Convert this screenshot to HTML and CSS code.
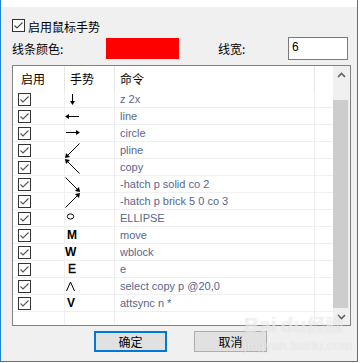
FILE: index.html
```html
<!DOCTYPE html>
<html>
<head>
<meta charset="utf-8">
<link rel="stylesheet" href="styles.css">
</head>
<body>
<div class="frame">
  <div class="strip"></div>
  <div class="dialog">
    <div class="enable">
      <span class="cb"><svg width="11" height="11" viewBox="0 0 11 11"><polyline points="1.5,5.5 4,8 9.5,2.5" fill="none" stroke="#444" stroke-width="1.1"/></svg></span>
      <span class="cjk">启用鼠标手势</span>
    </div>
    <div class="colorrow">
      <span class="cjk lbl-color">线条颜色:</span>
      <span class="swatch"></span>
      <span class="cjk lbl-width">线宽:</span>
      <span class="input">6</span>
    </div>
    <div class="list">
      <div class="grid">
        <div class="hd hd1 cjk">启用</div>
        <div class="hd cjk">手势</div>
        <div class="hd cjk">命令</div>
        <div class="hd hd-last"></div>

        <div class="c c1"><span class="cb"><svg width="11" height="11" viewBox="0 0 11 11"><polyline points="1.5,5.5 4,8 9.5,2.5" fill="none" stroke="#555" stroke-width="1.1"/></svg></span></div>
        <div class="c c2"><svg width="16" height="16" viewBox="0 0 16 16"><line x1="7.5" y1="3" x2="7.5" y2="11" stroke="#000"/><polygon points="5,10 10,10 7.5,14" fill="#000"/></svg></div>
        <div class="c c3">z 2x</div>
        <div class="c c4"></div>

        <div class="c c1"><span class="cb"><svg width="11" height="11" viewBox="0 0 11 11"><polyline points="1.5,5.5 4,8 9.5,2.5" fill="none" stroke="#555" stroke-width="1.1"/></svg></span></div>
        <div class="c c2"><svg width="16" height="16" viewBox="0 0 16 16"><line x1="3" y1="8.5" x2="14" y2="8.5" stroke="#000"/><polygon points="0,8.5 4,6 4,11" fill="#000"/></svg></div>
        <div class="c c3">line</div>
        <div class="c c4"></div>

        <div class="c c1"><span class="cb"><svg width="11" height="11" viewBox="0 0 11 11"><polyline points="1.5,5.5 4,8 9.5,2.5" fill="none" stroke="#555" stroke-width="1.1"/></svg></span></div>
        <div class="c c2"><svg width="16" height="16" viewBox="0 0 16 16"><line x1="1" y1="7.5" x2="12" y2="7.5" stroke="#000"/><polygon points="15,7.5 11,5 11,10" fill="#000"/></svg></div>
        <div class="c c3">circle</div>
        <div class="c c4"></div>

        <div class="c c1"><span class="cb"><svg width="11" height="11" viewBox="0 0 11 11"><polyline points="1.5,5.5 4,8 9.5,2.5" fill="none" stroke="#555" stroke-width="1.1"/></svg></span></div>
        <div class="c c2"><svg width="16" height="16" viewBox="0 0 16 16"><line x1="14.5" y1="1.5" x2="2.5" y2="13.5" stroke="#000"/><polygon points="0,16 1,11 5,15" fill="#000"/></svg></div>
        <div class="c c3">pline</div>
        <div class="c c4"></div>

        <div class="c c1"><span class="cb"><svg width="11" height="11" viewBox="0 0 11 11"><polyline points="1.5,5.5 4,8 9.5,2.5" fill="none" stroke="#555" stroke-width="1.1"/></svg></span></div>
        <div class="c c2"><svg width="16" height="16" viewBox="0 0 16 16"><line x1="2.5" y1="2.5" x2="14.5" y2="14.5" stroke="#000"/><polygon points="0,0 5,1 1,5" fill="#000"/></svg></div>
        <div class="c c3">copy</div>
        <div class="c c4"></div>

        <div class="c c1"><span class="cb"><svg width="11" height="11" viewBox="0 0 11 11"><polyline points="1.5,5.5 4,8 9.5,2.5" fill="none" stroke="#555" stroke-width="1.1"/></svg></span></div>
        <div class="c c2"><svg width="16" height="16" viewBox="0 0 16 16"><line x1="0.5" y1="1.5" x2="12.5" y2="13.5" stroke="#000"/><polygon points="15,16 10,15 14,11" fill="#000"/></svg></div>
        <div class="c c3">-hatch p solid co 2</div>
        <div class="c c4"></div>

        <div class="c c1"><span class="cb"><svg width="11" height="11" viewBox="0 0 11 11"><polyline points="1.5,5.5 4,8 9.5,2.5" fill="none" stroke="#555" stroke-width="1.1"/></svg></span></div>
        <div class="c c2"><svg width="16" height="16" viewBox="0 0 16 16"><line x1="0.5" y1="14.5" x2="12.5" y2="2.5" stroke="#000"/><polygon points="15,0 10,1 14,5" fill="#000"/></svg></div>
        <div class="c c3">-hatch p brick 5 0 co 3</div>
        <div class="c c4"></div>

        <div class="c c1"><span class="cb"><svg width="11" height="11" viewBox="0 0 11 11"><polyline points="1.5,5.5 4,8 9.5,2.5" fill="none" stroke="#555" stroke-width="1.1"/></svg></span></div>
        <div class="c c2"><svg width="16" height="16" viewBox="0 0 16 16"><ellipse cx="5.5" cy="6.5" rx="3.2" ry="2.6" fill="none" stroke="#000"/></svg></div>
        <div class="c c3">ELLIPSE</div>
        <div class="c c4"></div>

        <div class="c c1"><span class="cb"><svg width="11" height="11" viewBox="0 0 11 11"><polyline points="1.5,5.5 4,8 9.5,2.5" fill="none" stroke="#555" stroke-width="1.1"/></svg></span></div>
        <div class="c c2"><span class="g g-m">M</span></div>
        <div class="c c3">move</div>
        <div class="c c4"></div>

        <div class="c c1"><span class="cb"><svg width="11" height="11" viewBox="0 0 11 11"><polyline points="1.5,5.5 4,8 9.5,2.5" fill="none" stroke="#555" stroke-width="1.1"/></svg></span></div>
        <div class="c c2"><span class="g g-w">W</span></div>
        <div class="c c3">wblock</div>
        <div class="c c4"></div>

        <div class="c c1"><span class="cb"><svg width="11" height="11" viewBox="0 0 11 11"><polyline points="1.5,5.5 4,8 9.5,2.5" fill="none" stroke="#555" stroke-width="1.1"/></svg></span></div>
        <div class="c c2"><span class="g g-e">E</span></div>
        <div class="c c3">e</div>
        <div class="c c4"></div>

        <div class="c c1"><span class="cb"><svg width="11" height="11" viewBox="0 0 11 11"><polyline points="1.5,5.5 4,8 9.5,2.5" fill="none" stroke="#555" stroke-width="1.1"/></svg></span></div>
        <div class="c c2"><svg width="16" height="16" viewBox="0 0 16 16"><polyline points="1.5,13 5.5,4 9.5,13" fill="none" stroke="#000"/></svg></div>
        <div class="c c3">select copy p @20,0</div>
        <div class="c c4"></div>

        <div class="c c1"><span class="cb"><svg width="11" height="11" viewBox="0 0 11 11"><polyline points="1.5,5.5 4,8 9.5,2.5" fill="none" stroke="#555" stroke-width="1.1"/></svg></span></div>
        <div class="c c2"><span class="g g-v">V</span></div>
        <div class="c c3">attsync n *</div>
        <div class="c c4"></div>

        <div class="f"></div>
        <div class="f"></div>
        <div class="f"></div>
        <div class="f f-last"></div>
      </div>
      <div class="scrollbar">
        <div class="sb-btn"><svg width="9" height="6" viewBox="0 0 9 6"><polyline points="1,5 4.5,1.5 8,5" fill="none" stroke="#606060" stroke-width="1.6"/></svg></div>
        <div class="sb-gap"></div>
        <div class="sb-thumb"></div>
        <div class="sb-btn"><svg width="9" height="6" viewBox="0 0 9 6"><polyline points="1,1 4.5,4.5 8,1" fill="none" stroke="#606060" stroke-width="1.6"/></svg></div>
      </div>
    </div>
    <div class="buttons">
      <button class="btn btn-default cjk">确定</button>
      <button class="btn cjk">取消</button>
    </div>
  </div>
  <div class="watermark">
    <div class="wm-logo"><span class="wm-bai">Bai</span><span class="wm-du">du</span><span class="wm-jy">经验</span></div>
    <div class="wm-url">jingyan.baidu.com</div>
  </div>
</div>
</body>
</html>
```
FILE: styles.css
```css
html, body {
  margin: 0;
  padding: 0;
  background: #ffffff;
}
body {
  width: 362px;
  height: 363px;
  overflow: hidden;
  font-family: "Liberation Sans", Arial, sans-serif;
}
.cjk {
  font-family: "Noto Sans CJK SC", "Liberation Sans", sans-serif;
  font-size: 12px;
  color: #000;
}
.frame {
  position: relative;
  width: 356px;
  height: 361px;
  border-left: 1px solid #1e82d8;
  border-right: 1px solid #1e82d8;
  border-bottom: 1px solid #1e82d8;
}
.strip {
  height: 7px;
  background: #ffffff;
}
.dialog {
  height: 342px;
  background: #f0f0f0;
  padding: 12px 0 0 11px;
}
.cb {
  display: inline-flex;
  align-items: center;
  justify-content: center;
  box-sizing: border-box;
  width: 13px;
  height: 13px;
  border: 1px solid #333;
  background: #fff;
}
.cb svg {
  display: block;
}
.enable {
  display: flex;
  align-items: center;
  gap: 3px;
  height: 13px;
  line-height: 13px;
}
.enable .cjk {
  position: relative;
  top: 1px;
}
.colorrow {
  display: flex;
  align-items: center;
  height: 23px;
  margin-top: 5px;
  line-height: 14px;
}
.lbl-color {
  width: 94px;
}
.swatch {
  width: 73px;
  height: 21px;
  background: #ff0000;
}
.lbl-width {
  margin-left: 39px;
  width: 70px;
}
.input {
  box-sizing: border-box;
  width: 60px;
  height: 23px;
  border: 1px solid #7a7a7a;
  background: #fff;
  font-size: 12px;
  line-height: 19px;
  padding-left: 3px;
  color: #000;
}
.list {
  box-sizing: border-box;
  display: flex;
  width: 339px;
  height: 261px;
  margin-top: 5px;
  border: 1px solid #828282;
  background: #fff;
}
.grid {
  width: 320px;
  display: grid;
  grid-template-columns: 52px 50px 200px 18px;
  grid-template-rows: 25px repeat(13, 17px) 1fr;
}
.hd {
  border-right: 1px solid #e5e5e5;
  padding: 1px 0 0 5px;
  line-height: 23px;
  box-sizing: border-box;
}
.hd1 {
  padding-left: 8px;
}
.hd-last {
  border-right: none;
}
.c {
  box-sizing: border-box;
  border-right: 1px solid #f0f0f0;
  border-bottom: 1px solid #f0f0f0;
  display: flex;
  align-items: center;
}
.c1 {
  padding-left: 5px;
  padding-top: 1px;
}
.c2 {
  padding-left: 0;
  align-items: flex-start;
}
.c2 svg {
  display: block;
}
.c3 {
  padding-left: 5px;
  font-size: 11px;
  line-height: 16px;
  color: #59668f;
  white-space: nowrap;
}
.c4 {
  border-right: none;
}
.f {
  border-right: 1px solid #f0f0f0;
}
.f-last {
  border-right: none;
}
.g {
  font-family: "Liberation Sans", Arial, sans-serif;
  font-size: 12px;
  line-height: 16px;
  color: #000;
  font-weight: bold;
}
.g-m { padding-left: 2px; }
.g-w { padding-left: 0; }
.g-e { padding-left: 3px; font-weight: normal; -webkit-text-stroke: 0.3px #000; }
.g-v { padding-left: 2px; }
.scrollbar {
  width: 17px;
  display: flex;
  flex-direction: column;
  background: #f0f0f0;
}
.sb-btn {
  height: 17px;
  display: flex;
  align-items: center;
  justify-content: center;
}
.sb-gap {
  height: 17px;
}
.sb-thumb {
  flex: 1;
  width: 15px;
  background: #cdcdcd;
}
.buttons {
  display: flex;
  gap: 27px;
  margin-top: 5px;
  padding-left: 82px;
}
.btn {
  box-sizing: border-box;
  width: 73px;
  height: 21px;
  margin: 0;
  padding: 0;
  border: 1px solid #adadad;
  background: #e1e1e1;
  line-height: 17px;
  border-radius: 0;
}
.btn-default {
  border: 2px solid #0078d7;
}
.watermark {
  position: absolute;
  left: 243px;
  top: 312px;
  pointer-events: none;
}
.wm-logo {
  display: flex;
  align-items: baseline;
  font-family: "Liberation Sans", Arial, sans-serif;
  font-weight: bold;
  font-size: 21px;
  line-height: 24px;
  color: rgba(255, 255, 255, 0.55);
  text-shadow: 0 0 1px rgba(150, 150, 150, 0.3);
}
.wm-du {
  margin-left: 4px;
}
.wm-jy {
  font-family: "Noto Sans CJK SC", sans-serif;
  font-size: 18px;
  margin-left: 1px;
}
.wm-url {
  font-family: "Liberation Sans", Arial, sans-serif;
  font-size: 13px;
  line-height: 14px;
  margin-top: 2px;
  letter-spacing: 0.2px;
  color: rgba(255, 255, 255, 0.55);
  text-shadow: 0 0 1px rgba(150, 150, 150, 0.3);
}
```
